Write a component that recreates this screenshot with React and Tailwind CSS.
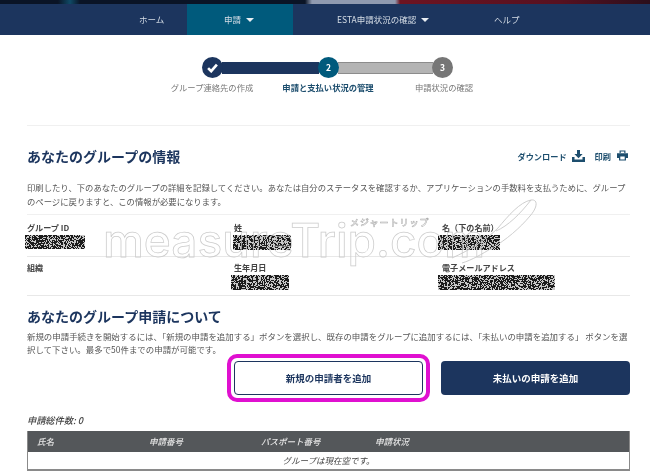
import React from "react";

const JP = "font-['Noto_Sans_CJK_JP','Noto_Sans',sans-serif]";

// black and white static that hides the personal data
const Noise = ({ w, h, className = "" }) => {
  let seed = w * 31 + h * 17;
  let d = "";
  for (let y = 0; y < h; y++) {
    for (let x = 0; x < w; x++) {
      seed = (seed * 16807) % 2147483647;
      if (seed % 100 < 42) d += `M${x} ${y}h1v1h-1z`;
    }
  }
  return (
    <svg width={w} height={h} className={`block ${className}`} aria-hidden="true">
      <rect width={w} height={h} fill="#1c1c1c" />
      <path d={d} fill="#c8c8c8" />
    </svg>
  );
};

const Caret = () => (
  <span className="ml-[5px] inline-block border-x-[4px] border-t-[4px] border-x-transparent border-t-[#e8edf2] align-middle" />
);

const Field = ({ label, children }) => (
  <div className="h-[41px] pt-[6px]">
    <div className="text-[8.1px] font-bold leading-[13px] text-[#444]">{label}</div>
    {children}
  </div>
);

const Step = ({ bg, children }) => (
  <div className={`z-10 flex h-[21px] w-[21px] shrink-0 items-center justify-center rounded-full text-[8.5px] font-bold text-white ${bg}`}>
    {children}
  </div>
);

const Watermark = () => (
  <div className="pointer-events-none absolute left-0 top-0 h-[473px] w-[650px] overflow-hidden">
    <div className="absolute left-[103px] top-[210px] whitespace-nowrap font-['Inter',sans-serif] text-[46px] font-medium leading-[60px] text-transparent [-webkit-text-stroke:0.75px_#cccccc]">
      measureTrip.com
    </div>
    <div className="absolute left-[350px] top-[216px] whitespace-nowrap font-['Noto_Sans_CJK_JP',sans-serif] text-[9px] font-medium leading-[14px] tracking-[1px] text-transparent [-webkit-text-stroke:0.5px_#aaaaaa]">
      メジャートリップ
    </div>
    <svg width="650" height="473" className="absolute left-0 top-0" fill="none" stroke="#c8c8c8" strokeWidth="0.9">
      <path d="M452 258 C470 250 486 240 498 228 C508 216 520 202 531 200 C538 199 538 207 530 216 C520 228 506 240 492 248 C482 254 472 260 462 263" />
      <path d="M496 231 C508 226 520 214 531 200" />
    </svg>
  </div>
);

export default function App() {
  return (
    <div className={`relative h-[473px] w-[650px] overflow-hidden bg-white blur-[0.35px] ${JP}`}>
      <div className="h-[4px] bg-[linear-gradient(90deg,#0a1426_0,#0a1426_58px,#0f4a66_70px,#0a1426_80px,#0a1426_305px,#8f9ab0_312px,#8f9ab0_395px,#6d1421_400px,#571120_560px,#2b0f1c_650px)]" />

      <nav className="flex h-[31px] items-stretch bg-[#1c355e] text-[8.5px] text-[#d5dde6]">
        <a className="ml-[139px] flex w-[48px] items-center">ホーム</a>
        <a className="flex w-[106px] items-center justify-center bg-[#005a7c] pr-[2px]">
          申請
          <Caret />
        </a>
        <a className="ml-[44px] flex w-[90px] items-center whitespace-nowrap">
          ESTA申請状況の確認
          <Caret />
        </a>
        <a className="ml-[67px] flex items-center">ヘルプ</a>
      </nav>

      <section className="pt-[22px]">
        <div className="flex items-center justify-center pl-[5px]">
          <Step bg="bg-[#1c355e]">
            <svg width="11" height="10" viewBox="0 0 10 9" fill="none" stroke="#fff" strokeWidth="2.4">
              <path d="M1 4.6 L3.8 7.4 L9 1.4" />
            </svg>
          </Step>
          <div className="mx-[-1px] h-[12px] w-[97px] bg-[#1c355e]" />
          <Step bg="bg-[#005a7c]">2</Step>
          <div className="mx-[-1px] h-[12px] w-[95px] border-y border-[#8c8c8c] bg-[#b4b4b4]" />
          <Step bg="bg-[#767676]">3</Step>
        </div>
        <div className="mt-[3px] flex justify-center pl-[6px] text-center text-[8.3px] leading-[12px]">
          <div className="w-[116px] text-[#777]">グループ連絡先の作成</div>
          <div className="w-[116px] font-bold text-[#1d4e6e]">申請と支払い状況の管理</div>
          <div className="w-[116px] text-[#777]">申請状況の確認</div>
        </div>
      </section>

      <main className="px-[27px] pr-[20px]">
        <div className="mt-[32px] flex items-center justify-between border-t border-[#f0f0f0] pt-[19px]">
          <h1 className="text-[14px] font-bold leading-[22px] text-[#1c355e]">あなたのグループの情報</h1>
          <div className="flex items-center pr-[2px] text-[8.2px] font-bold text-[#1d4e6e]">
            ダウンロード
            <svg width="13" height="12" viewBox="0 0 13 12" className="ml-[5px]" fill="#1d4e6e">
              <path d="M5 0h3v4h2.6L6.5 8.2 2.4 4H5z" />
              <path d="M0 7h2.5v2.6h8V7H13v5H0z" />
            </svg>
            <span className="ml-[10px]">印刷</span>
            <svg width="11" height="11" viewBox="0 0 13 12" className="ml-[6px]" fill="#1d4e6e">
              <path d="M3 0h7v3H8.6V1.4H4.4V3H3z" />
              <path fillRule="evenodd" d="M0 3.4h13V9h-2.4v3H2.4V9H0zM3.9 7.2v3.4h5.2V7.2z" />
            </svg>
          </div>
        </div>

        <p className="mt-[13px] text-[8.35px] leading-[14px] text-[#555]">
          印刷したり、下のあなたのグループの詳細を記録してください。あなたは自分のステータスを確認するか、アプリケーションの手数料を支払うために、グループのページに戻りますと、この情報が必要になります。
        </p>

        <div className="mt-[6px] border-t border-[#f0f0f0]">
          <div className="grid grid-cols-[207px_208px_1fr] border-b border-[#e8e8e8]">
            <Field label="グループ ID"><Noise w={60} h={14} className="ml-[-2px] mt-[1px]" /></Field>
            <Field label="姓"><Noise w={58} h={15} className="ml-[-1px] mt-[1px]" /></Field>
            <Field label="名（下の名前）"><Noise w={62} h={15} className="ml-[-4px] mt-[1px]" /></Field>
          </div>
          <div className="grid grid-cols-[207px_208px_1fr] border-b border-[#e8e8e8]">
            <div className="h-[38px] pt-[4px] text-[8.1px] font-bold leading-[13px] text-[#444]">組織</div>
            <div className="h-[38px] pt-[4px]">
              <div className="text-[8.1px] font-bold leading-[13px] text-[#444]">生年月日</div>
              <Noise w={58} h={15} className="ml-[-3px] mt-[1px]" />
            </div>
            <div className="h-[38px] pt-[4px]">
              <div className="text-[8.1px] font-bold leading-[13px] text-[#444]">電子メールアドレス</div>
              <Noise w={117} h={15} className="ml-[-4px] mt-[1px]" />
            </div>
          </div>
        </div>

        <h2 className="mt-[9px] text-[14px] font-bold leading-[22px] text-[#1c355e]">あなたのグループ申請について</h2>
        <p className="mt-[3px] text-[8.45px] leading-[13px] text-[#555]">
          新規の申請手続きを開始するには、「新規の申請を追加する」ボタンを選択し、既存の申請をグループに追加するには、「未払いの申請を追加する」 ボタンを選択して下さい。最多で50件までの申請が可能です。
        </p>

        <div className="mt-[5px] flex justify-end gap-[18px]">
          <div className="relative">
            <button className="h-[34px] w-[189px] rounded-[4px] border border-[#1c355e] bg-white text-[9.5px] font-bold text-[#1c355e]">
              新規の申請者を追加
            </button>
            <span className="absolute inset-[-7px] rounded-[10px] border-[4px] border-[#e010d0]" />
          </div>
          <button className="h-[34px] w-[189px] rounded-[4px] bg-[#1c355e] text-[9.5px] font-bold text-white">
            未払いの申請を追加
          </button>
        </div>

        <div className="mt-[19px] text-[9.2px] font-medium italic leading-[12px] text-[#444]">申請総件数: 0</div>

        <div className="mt-[5px] border-x border-b-2 border-[#8a8a8a]">
          <div className="grid h-[21px] grid-cols-[112px_112px_114px_1fr] items-center bg-[#54575a] pl-[9px] text-[8.5px] font-medium italic text-[#e6e6e6]">
            <span>氏名</span>
            <span>申請番号</span>
            <span>パスポート番号</span>
            <span>申請状況</span>
          </div>
          <div className="flex h-[17px] items-center justify-center text-[8.5px] italic text-[#444]">グループは現在空です。</div>
        </div>
      </main>

      <Watermark />
    </div>
  );
}
